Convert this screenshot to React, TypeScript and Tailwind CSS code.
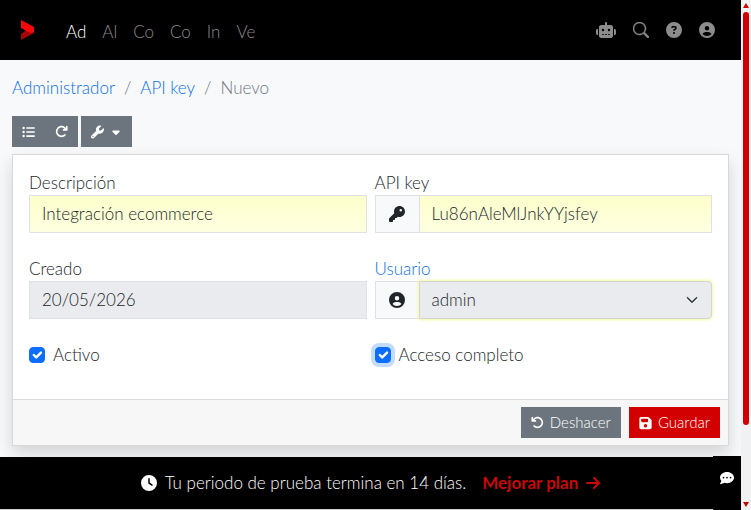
import { useState } from "react";
import type { ComponentProps, ReactNode } from "react";
import clsx from "clsx";
import {
    FaArrowRight,
    FaArrowRotateLeft,
    FaArrowRotateRight,
    FaCaretDown,
    FaCircleQuestion,
    FaCircleUser,
    FaClock,
    FaCommentDots,
    FaFloppyDisk,
    FaKey,
    FaListUl,
    FaRobot,
    FaWrench,
} from "react-icons/fa6";
import { BsChevronDown, BsSearch } from "react-icons/bs";

const menu = [
    { id: "admin", label: "Ad" },
    { id: "almacen", label: "Al" },
    { id: "compras", label: "Co" },
    { id: "contabilidad", label: "Co" },
    { id: "informes", label: "In" },
    { id: "ventas", label: "Ve" },
];

function Logo() {
    return (
        <svg viewBox="0 0 14 20" className="w-[14px] h-5">
            <path d="M1 14 L8 9 L14 10 V13 L1 20 Z" fill="#a50505" />
            <path d="M1 0 L14 7 V12 L10 13 L1 8 Z" fill="#f80808" />
        </svg>
    );
}

function Navbar() {
    return (
        <header className="h-[60px] shrink-0 bg-black flex items-center pt-1 pl-5 pr-[26px]">
            <a href="#" aria-label="Inicio" className="mr-8 -mt-1">
                <Logo />
            </a>
            <nav className="flex items-center gap-4">
                {menu.map((item, i) => (
                    <a key={item.id} href={"#" + item.id} className={i === 0 ? "text-white" : "text-[#8c8c8c]"}>
                        {item.label}
                    </a>
                ))}
            </nav>
            <div className="ml-auto -mt-1 flex items-center gap-[17px] text-[#8c8c8c]">
                <button aria-label="Asistente"><FaRobot className="w-5 h-4" /></button>
                <button aria-label="Buscar"><BsSearch className="w-4 h-4 stroke-[0.5]" /></button>
                <button aria-label="Ayuda"><FaCircleQuestion className="w-4 h-4" /></button>
                <button aria-label="Usuario"><FaCircleUser className="w-4 h-4" /></button>
            </div>
        </header>
    );
}

function Button({ className, ...props }: ComponentProps<"button">) {
    return (
        <button
            type="button"
            className={clsx("h-[31px] px-[10px] flex items-center gap-[6px] text-white text-[15px]", className)}
            {...props}
        />
    );
}

function Field({ id, label, link, icon, children }: { id: string; label: string; link?: boolean; icon?: ReactNode; children: ReactNode }) {
    return (
        <div>
            <label htmlFor={id} className="block leading-6">
                {link ? <a href="#usuarios" className="text-[#0d6fdc]">{label}</a> : label}
            </label>
            <div className="h-[38px] flex">
                {icon && (
                    <span className="w-11 shrink-0 flex items-center justify-center bg-[#f8f9fa] border border-r-0 border-[#dee2e6]">
                        {icon}
                    </span>
                )}
                {children}
            </div>
        </div>
    );
}

function Check({ label, focused, checked, onChange }: { label: string; focused?: boolean; checked: boolean; onChange: (v: boolean) => void }) {
    return (
        <label className="flex items-center gap-2 leading-6">
            <span className="grid w-4 h-4">
                <input
                    type="checkbox"
                    checked={checked}
                    onChange={e => onChange(e.target.checked)}
                    className={clsx(
                        "col-start-1 row-start-1 appearance-none w-4 h-4 rounded border border-[#dee2e6] checked:bg-[#0d6efd] checked:border-[#0d6efd]",
                        focused && "ring-4 ring-[#0d6efd]/25"
                    )}
                />
                {checked && (
                    <svg viewBox="0 0 20 20" className="col-start-1 row-start-1 w-4 h-4 pointer-events-none">
                        <path d="m6 10 3 3 6-6" fill="none" stroke="#fff" strokeWidth="3" strokeLinecap="round" strokeLinejoin="round" />
                    </svg>
                )}
            </span>
            {label}
        </label>
    );
}

const inputClass = "w-full min-w-0 h-full px-3 pb-0.5 border border-[#dee2e6]";

function ApiKeyForm() {
    const [description, setDescription] = useState("Integración ecommerce");
    const [apiKey, setApiKey] = useState("Lu86nAleMlJnkYYjsfey");
    const [active, setActive] = useState(true);
    const [fullAccess, setFullAccess] = useState(true);

    return (
        <form className="bg-white border border-[#d6d8da] shadow-[0_8px_16px_rgba(0,0,0,0.15)]">
            <div className="px-4 pt-4 pb-8 grid grid-cols-2 gap-x-2 gap-y-6">
                <Field id="description" label="Descripción">
                    <input
                        id="description"
                        value={description}
                        onChange={e => setDescription(e.target.value)}
                        className={clsx(inputClass, "bg-linear-to-b from-[#fdffcb] to-[#feffe0]")}
                    />
                </Field>
                <Field id="apikey" label="API key" icon={<FaKey className="w-4 h-4" />}>
                    <input
                        id="apikey"
                        value={apiKey}
                        onChange={e => setApiKey(e.target.value)}
                        className={clsx(inputClass, "bg-linear-to-b from-[#fdffcb] to-[#feffe0]")}
                    />
                </Field>
                <Field id="created" label="Creado">
                    <input id="created" readOnly value="20/05/2026" className={clsx(inputClass, "bg-[#e9ebee]")} />
                </Field>
                <Field id="user" label="Usuario" link icon={<FaCircleUser className="w-4 h-4" />}>
                    <span className="grid flex-1 items-center">
                        <select
                            id="user"
                            className="col-start-1 row-start-1 appearance-none w-full h-[38px] px-3 rounded-r border border-[#d3d8ce] bg-[#e9ebee] shadow-[0_0_3px_1px_#f4f8a8]"
                        >
                            <option>admin</option>
                        </select>
                        <BsChevronDown className="col-start-1 row-start-1 justify-self-end mr-[14px] w-3 h-3 stroke-1 pointer-events-none" />
                    </span>
                </Field>
                <Check label="Activo" checked={active} onChange={setActive} />
                <Check label="Acceso completo" focused checked={fullAccess} onChange={setFullAccess} />
            </div>
            <div className="px-2 py-[7px] flex justify-end gap-2 bg-[#f7f7f7] border-t border-[#dcdcdc]">
                <Button type="reset" className="bg-[#6c757d]">
                    <FaArrowRotateLeft className="w-[13px] h-[13px]" />
                    Deshacer
                </Button>
                <Button className="bg-[#d30000]">
                    <FaFloppyDisk className="w-[13px] h-[14px]" />
                    Guardar
                </Button>
            </div>
        </form>
    );
}

function Scrollbar() {
    return (
        <div className="w-[10px] shrink-0 bg-[#f1f1f1] flex flex-col items-center py-[3px]" aria-hidden="true">
            <svg viewBox="0 0 6 5" className="w-[6px] h-[5px]"><path d="M3 0 6 5H0Z" fill="#d00000" /></svg>
            <div className="flex-1 w-full pt-1 pb-1 flex justify-center">
                <div className="w-[6px] h-[85%] rounded-full bg-[#d00000]" />
            </div>
            <svg viewBox="0 0 6 5" className="w-[6px] h-[5px]"><path d="M0 0H6L3 5Z" fill="#c00000" /></svg>
        </div>
    );
}

export default function App() {
    return (
        <div className="h-screen flex text-[17px] font-light text-[#212529] font-[Lato,sans-serif]">
            <div className="flex-1 min-w-0 flex flex-col bg-[#f8f9fb]">
                <Navbar />
                <main className="flex-1 min-h-0 overflow-hidden px-3 pt-4">
                    <nav className="flex gap-[9px] leading-6 text-[#6c757d]" aria-label="Ruta">
                        <a href="#admin" className="text-[#0d6fdc]">Administrador</a>
                        <span>/</span>
                        <a href="#apikeys" className="text-[#0d6fdc]">API key</a>
                        <span>/</span>
                        <span>Nuevo</span>
                    </nav>
                    <div className="mt-4 mb-[7px] flex gap-[3px]">
                        <div className="flex">
                            <Button className="bg-[#6c757d]" aria-label="Listado"><FaListUl className="w-[13px] h-[14px]" /></Button>
                            <Button className="bg-[#6c757d]" aria-label="Recargar"><FaArrowRotateRight className="w-[13px] h-[13px]" /></Button>
                        </div>
                        <Button className="bg-[#6c757d]" aria-label="Herramientas">
                            <FaWrench className="w-[13px] h-[14px]" />
                            <FaCaretDown className="w-3 h-3" />
                        </Button>
                    </div>
                    <ApiKeyForm />
                </main>
                <footer className="h-[53px] shrink-0 bg-black border-b border-[#cfcfcf] text-white flex">
                    <div className="flex-1 pl-7 flex items-center justify-center">
                        <FaClock className="w-4 h-4 mr-2" />
                        Tu periodo de prueba termina en 14 días.
                        <a href="#plan" className="ml-4 flex items-center gap-2 font-bold text-[#c90808]">
                            Mejorar plan
                            <FaArrowRight className="w-[14px] h-4" />
                        </a>
                    </div>
                    <button className="w-7 h-[54px] -mt-px pb-[10px] flex items-center justify-center bg-black" aria-label="Chat">
                        <FaCommentDots className="w-[14px] h-[14px]" />
                    </button>
                </footer>
            </div>
            <Scrollbar />
        </div>
    );
}
